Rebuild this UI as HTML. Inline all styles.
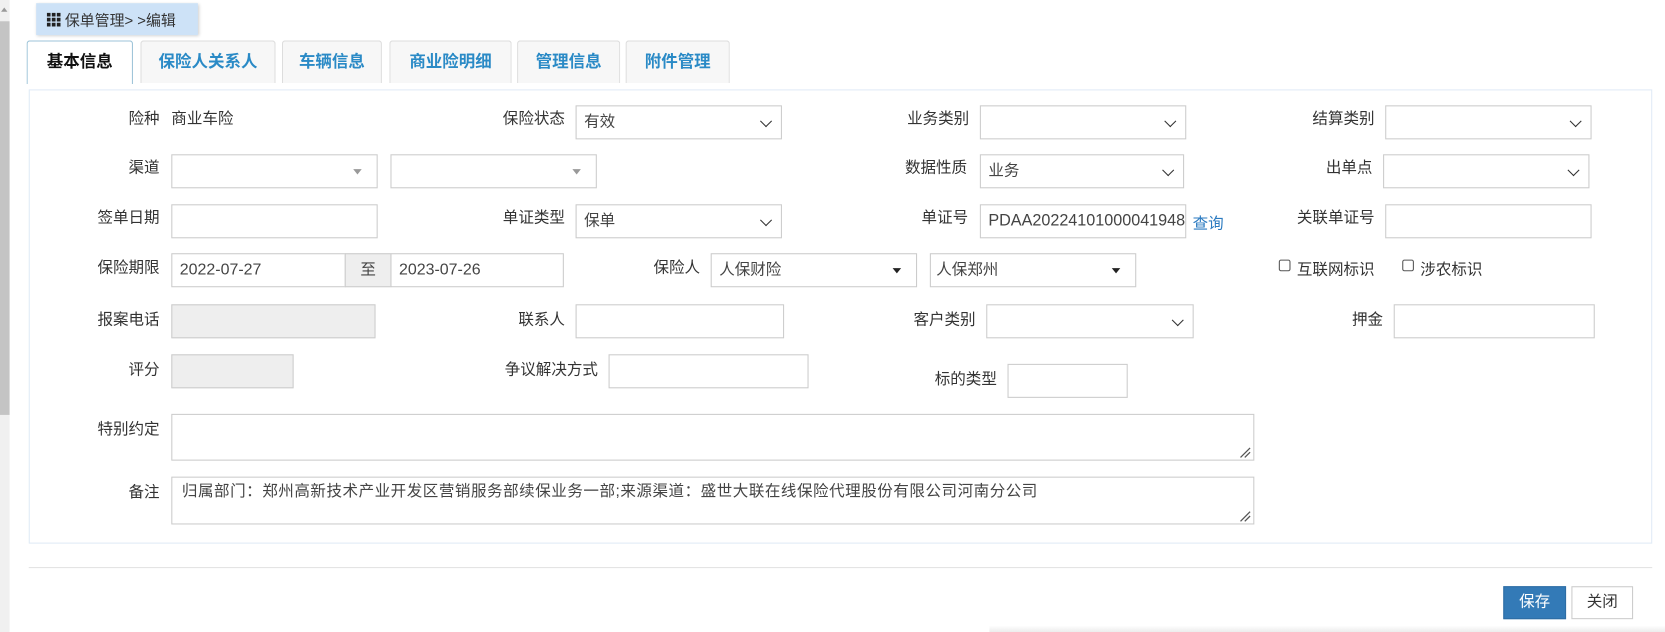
<!DOCTYPE html>
<html><head><meta charset="utf-8"><style>
*{box-sizing:border-box;margin:0;padding:0}
html,body{width:1665px;height:632px;overflow:hidden;background:#fff}
#w{position:absolute;left:0;top:0;width:1565px;height:594px;transform:scale(1.0639);transform-origin:0 0;font-family:"Liberation Sans","Noto Sans CJK SC",sans-serif;font-size:14.6px;color:#333}
.a{position:absolute}
.lb{position:absolute;text-align:right;white-space:nowrap;font-size:14.6px;color:#333}
.in{position:absolute;height:32px;border:1px solid #ccc;background:#fff;font-size:14.6px;color:#444;padding:0 7px;line-height:30px;white-space:nowrap;overflow:hidden}
.dis{background:#eee}
.sel::after{content:"";position:absolute;right:10px;top:10px;width:7px;height:7px;border-right:1.6px solid #333;border-bottom:1.6px solid #333;transform:rotate(45deg)}
.tri::after{content:"";position:absolute;right:14px;top:13px;border-left:4px solid transparent;border-right:4px solid transparent;border-top:5px solid #999}
.triB::after{border-top-color:#222}
.tab{position:absolute;top:38px;height:40px;border:1px solid #ddd;border-bottom:none;background:#f7f7f7;color:#2a8ac6;font-weight:bold;font-size:15.5px;text-align:center;line-height:40px;border-radius:3px 3px 0 0}
.cb{position:absolute;width:11px;height:11px;border:1px solid #555;border-radius:2px;background:#fff}
</style></head><body><div id="w">
<div class="a" style="left:0;top:0;width:9px;height:594px;background:#f0f0f0"></div>
<div class="a" style="left:0;top:20px;width:9px;height:370px;background:#c4c4c4"></div>
<div class="a" style="left:1px;top:7px;border-left:3px solid transparent;border-right:3px solid transparent;border-bottom:4px solid #999"></div>

<div class="a" style="left:34px;top:3px;width:152px;height:30px;background:#cde2f7;box-shadow:1px 1px 3px rgba(0,0,0,.2)"></div>
<svg class="a" style="left:44px;top:12px" width="13" height="13" viewBox="0 0 13 13" fill="#222"><rect x="0" y="0" width="3.5" height="3.5"/><rect x="4.7" y="0" width="3.5" height="3.5"/><rect x="9.4" y="0" width="3.5" height="3.5"/><rect x="0" y="4.7" width="3.5" height="3.5"/><rect x="4.7" y="4.7" width="3.5" height="3.5"/><rect x="9.4" y="4.7" width="3.5" height="3.5"/><rect x="0" y="9.4" width="3.5" height="3.5"/><rect x="4.7" y="9.4" width="3.5" height="3.5"/><rect x="9.4" y="9.4" width="3.5" height="3.5"/></svg>
<div class="a" style="left:61px;top:9px;font-size:14px;color:#333">保单管理&gt;&nbsp;&gt;编辑</div>

<div class="tab" style="left:25px;width:100px;background:#fff;color:#111;border-color:#9cc3d8;height:41px;z-index:2">基本信息</div>
<div class="tab" style="left:132px;width:127px">保险人关系人</div>
<div class="tab" style="left:265px;width:94px">车辆信息</div>
<div class="tab" style="left:366px;width:115px">商业险明细</div>
<div class="tab" style="left:486px;width:97px">管理信息</div>
<div class="tab" style="left:588px;width:98px">附件管理</div>

<div class="a" style="left:27px;top:84px;width:1526px;height:427px;border:1px solid #e0ebf6"></div>

<div class="lb" style="right:1415px;top:100px">险种</div>
<div class="a" style="left:161px;top:100px">商业车险</div>
<div class="lb" style="right:1034px;top:100px">保险状态</div>
<div class="in sel" style="left:541px;top:99px;width:194px">有效</div>
<div class="lb" style="right:654px;top:100px">业务类别</div>
<div class="in sel" style="left:921px;top:99px;width:194px"></div>
<div class="lb" style="right:273px;top:100px">结算类别</div>
<div class="in sel" style="left:1302px;top:99px;width:194px"></div>

<div class="lb" style="right:1415px;top:146px">渠道</div>
<div class="in tri" style="left:161px;top:145px;width:194px"></div>
<div class="in tri" style="left:367px;top:145px;width:194px"></div>
<div class="lb" style="right:656px;top:146px">数据性质</div>
<div class="in sel" style="left:921px;top:145px;width:192px">业务</div>
<div class="lb" style="right:275px;top:146px">出单点</div>
<div class="in sel" style="left:1300px;top:145px;width:194px"></div>

<div class="lb" style="right:1415px;top:193px">签单日期</div>
<div class="in" style="left:161px;top:192px;width:194px"></div>
<div class="lb" style="right:1034px;top:193px">单证类型</div>
<div class="in sel" style="left:541px;top:192px;width:194px">保单</div>
<div class="lb" style="right:655px;top:193px">单证号</div>
<div class="in" style="left:921px;top:192px;width:194px;padding-left:7px;font-size:15.2px">PDAA20224101000041948</div>
<div class="a" style="left:1121px;top:199px;color:#2a7ac0">查询</div>
<div class="lb" style="right:273px;top:193px">关联单证号</div>
<div class="in" style="left:1302px;top:192px;width:194px"></div>

<div class="lb" style="right:1415px;top:240px">保险期限</div>
<div class="in" style="left:161px;top:238px;width:164px;font-size:15px">2022-07-27</div>
<div class="in" style="left:324px;top:238px;width:44px;background:#eee;text-align:center">至</div>
<div class="in" style="left:367px;top:238px;width:163px;font-size:15px">2023-07-26</div>
<div class="lb" style="right:907px;top:240px">保险人</div>
<div class="in tri triB" style="left:668px;top:238px;width:194px">人保财险</div>
<div class="in tri triB" style="left:874px;top:238px;width:194px;padding-left:5px">人保郑州</div>
<div class="cb" style="left:1202px;top:244px"></div>
<div class="a" style="left:1219px;top:242px">互联网标识</div>
<div class="cb" style="left:1318px;top:244px"></div>
<div class="a" style="left:1335px;top:242px">涉农标识</div>

<div class="lb" style="right:1415px;top:289px">报案电话</div>
<div class="in dis" style="left:161px;top:286px;width:192px"></div>
<div class="lb" style="right:1034px;top:289px">联系人</div>
<div class="in" style="left:541px;top:286px;width:196px"></div>
<div class="lb" style="right:648px;top:289px">客户类别</div>
<div class="in sel" style="left:927px;top:286px;width:195px"></div>
<div class="lb" style="right:265px;top:289px">押金</div>
<div class="in" style="left:1310px;top:286px;width:189px"></div>

<div class="lb" style="right:1415px;top:336px">评分</div>
<div class="in dis" style="left:161px;top:333px;width:115px"></div>
<div class="lb" style="right:1003px;top:336px">争议解决方式</div>
<div class="in" style="left:572px;top:333px;width:188px"></div>
<div class="lb" style="right:628px;top:345px">标的类型</div>
<div class="in" style="left:947px;top:342px;width:113px"></div>

<div class="lb" style="right:1415px;top:392px">特别约定</div>
<div class="in" style="left:161px;top:389px;width:1018px;height:44px"></div>
<div class="lb" style="right:1415px;top:451px">备注</div>
<div class="in" style="left:161px;top:448px;width:1018px;height:45px;line-height:26px;padding-left:9px;color:#444;font-size:14.6px;letter-spacing:0.5px">归属部门：郑州高新技术产业开发区营销服务部续保业务一部;来源渠道：盛世大联在线保险代理股份有限公司河南分公司</div>
<svg class="a" style="left:1165px;top:420px" width="11" height="11"><path d="M1 10L10 1M5 10L10 5" stroke="#555" stroke-width="1.2"/></svg>
<svg class="a" style="left:1165px;top:480px" width="11" height="11"><path d="M1 10L10 1M5 10L10 5" stroke="#555" stroke-width="1.2"/></svg>

<div class="a" style="left:27px;top:533px;width:1526px;height:1px;background:#e3e3e3"></div>
<div class="a" style="left:1413px;top:551px;width:59px;height:31px;background:#337ab7;border:1px solid #2e6da4;color:#fff;text-align:center;line-height:29px">保存</div>
<div class="a" style="left:1477px;top:551px;width:58px;height:31px;background:#fff;border:1px solid #ccc;color:#333;text-align:center;line-height:29px">关闭</div>
<div class="a" style="left:930px;top:588px;width:635px;height:6px;background:linear-gradient(#fff,#ececec)"></div>
</div></body></html>
